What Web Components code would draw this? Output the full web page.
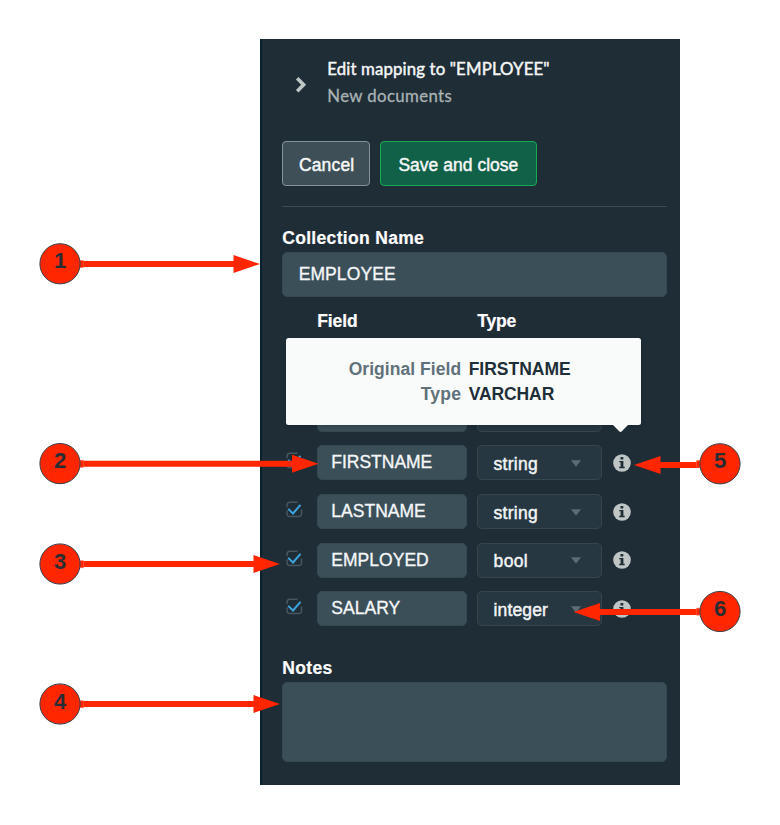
<!DOCTYPE html>
<html lang="en">
<head>
<meta charset="utf-8">
<title>Edit mapping</title>
<style>
body{margin:0;width:780px;height:825px;background:#fff;overflow:hidden;position:relative;font-family:"Liberation Sans",Arial,sans-serif}
</style>
</head>
<body>
<mapping-page></mapping-page>
<script>
const define = (name, html, setup) => customElements.define(name, class extends HTMLElement {
  connectedCallback() {
    if (this.shadowRoot) return;
    const root = this.attachShadow({mode: 'open'});
    const attr = n => this.getAttribute(n) || '';
    root.innerHTML = typeof html === 'function' ? html(attr) : html;
    if (setup) setup(this, root);
  }
});

/* One line of text whose tracking is adjusted to span the width in "w". */
define('fit-text', a => `<style>:host{display:block;width:${a('w')}px;white-space:nowrap}span{display:inline-block}</style><span>${a('text')}</span>`, (el, root) => {
  const s = root.querySelector('span');
  const gap = (Number(el.getAttribute('w')) - s.getBoundingClientRect().width) / el.getAttribute('text').length;
  s.style.letterSpacing = gap + 'px';
});

define('panel-header', `<style>
:host{display:flex;height:102px;box-sizing:border-box;padding:17px 0 0 11.5px;font-family:Lato,"Open Sans",sans-serif;font-size:16.8px;line-height:26.5px}
svg{flex:none;width:14px;height:20px;margin:19px 0 0}
div{margin-left:19.5px}
.t{color:#f4f6f6;-webkit-text-stroke:.45px #f4f6f6}
.s{color:#a9b2b3;-webkit-text-stroke:.3px #a9b2b3}
</style>
<svg viewBox="0 0 14 20"><path d="M3.2 3.2 9.6 9.7 3.2 16.2" fill="none" stroke="#bfc6c6" stroke-width="3.6"/></svg>
<div><fit-text class="t" w="222.5" text="Edit mapping to &quot;EMPLOYEE&quot;"></fit-text><fit-text class="s" w="125" text="New documents"></fit-text></div>`);

define('action-button', a => `<style>
:host{display:flex;box-sizing:border-box;width:${a('box')}px;height:45px;padding-left:${a('pad')}px;border:1px solid ${a('edge')};border-radius:4px;background:${a('fill')};color:#f5f7f7;font-size:17.5px;line-height:46px;-webkit-text-stroke:.45px #f5f7f7}
</style><fit-text w="${a('w')}" text="${a('text')}"></fit-text>`);

define('field-label', `<style>:host{display:block;font:bold 17.5px/20px "Liberation Sans",sans-serif;color:#fff;-webkit-text-stroke:.2px #fff}</style><slot></slot>`);

define('text-field', `<style>
:host{display:flex;box-sizing:border-box;background:#3b4f59;border:1px solid #364953;border-radius:5px;color:#f4f6f7;font-size:17.5px;-webkit-text-stroke:.35px #f4f6f7}
</style><slot></slot>`);

define('check-mark', `<style>:host{display:block;width:17px;height:17px}svg{display:block}</style>
<svg width="17" height="17" viewBox="0 0 17 17" fill="none"><path d="M11.5 1.2H4a3 3 0 0 0-3 3v2M1 9.5V13a2.5 2.5 0 0 0 2.5 2.5H13a2.5 2.5 0 0 0 2.5-2.5V8.5" stroke="#48575f" stroke-width="1.5"/><path d="m2.2 7.9 4.8 4.6 7.5-8.7" stroke="#3da5dc" stroke-width="2"/></svg>`);

define('type-select', a => `<style>
:host{display:flex;justify-content:space-between;align-items:center;box-sizing:border-box;width:125px;height:35px;padding:2px 20px 0 15.3px;border:1.4px solid #35464f;border-radius:5px;background:#263741;color:#f2f4f5;font-size:17.5px;line-height:30px;-webkit-text-stroke:.45px #f2f4f5}
svg{width:10px;height:7px;margin-top:-1px}
</style><fit-text w="${a('w')}" text="${a('text')}"></fit-text><svg viewBox="0 0 10 7"><path d="M0 .2h10L5 6.8z" fill="#5d6c74"/></svg>`);

define('info-icon', `<style>:host{display:block;width:18px;height:18px}svg{display:block}</style>
<svg width="18" height="18" viewBox="0 0 18 18"><circle cx="9" cy="9" r="8.8" fill="#bfc5c5"/><path d="M7.5 3h2.8v2.5H7.5zM6.2 6.9h4.2v5.9h1.3v1.4H6.2v-1.4h1.4V8.3H6.2z" fill="#1f2d36"/></svg>`);

define('field-row', a => `<style>
:host{display:flex;height:35px}
check-mark{margin:7px 14px 0 .5px}
text-field{width:150px;height:35px;padding-left:13px;line-height:32.5px;margin-right:10px}
info-icon{margin:8.7px 0 0 11px}
</style><check-mark></check-mark>
<text-field><fit-text w="${a('nw')}" text="${a('name')}"></fit-text></text-field>
<type-select w="${a('tw')}" text="${a('type')}"></type-select><info-icon></info-icon>`);

define('origin-tooltip', `<style>
:host{position:absolute;left:24.2px;top:299px;width:355px;height:87px;box-sizing:border-box;padding-top:19px;background:#f9fbfa;border-radius:2.5px;box-shadow:0 1px 4px #0d1b2455;color:#1f2f39;font-weight:bold;font-size:17.5px;line-height:25px}
.r{display:grid;grid-template-columns:175px auto;column-gap:7.5px}
.k{color:#61717a;justify-self:end}
svg{position:absolute;left:327px;top:86.5px;width:15px;height:8px}
</style>
<div class="r"><fit-text class="k" w="112.5" text="Original Field"></fit-text><fit-text w="102" text="FIRSTNAME"></fit-text></div>
<div class="r"><fit-text class="k" w="40.5" text="Type"></fit-text><fit-text w="85.5" text="VARCHAR"></fit-text></div>
<svg viewBox="0 0 15 8"><path d="M0 0h15L8.8 6.3q-1.3 1.2-2.6 0z" fill="#f9fbfa"/></svg>`);

define('covered-row', `<style>
:host{display:flex;height:35px;padding-left:31.5px;gap:10px}
text-field{width:150px}
i{box-sizing:border-box;width:125px;border:1.4px solid #35464f;border-radius:5px;background:#263741}
</style><text-field></text-field><i></i>`);

define('mapping-panel', `<style>
:host{display:block;position:relative;box-sizing:border-box;width:420px;height:746px;margin:39px 0 0 260px;padding:0 13px 0 20.2px;border-left:2px solid #06212c;background:#1f2d37}
.actions{display:flex;gap:10px;height:65px}
hr{margin:0;border:0;height:1px;background:#3d4c54}
.name{padding:21px 0 4px}
.big{height:45px;padding-left:15.5px;line-height:42px}
.cols{display:flex;box-sizing:border-box;padding:14px 0 0 35px;height:99.8px}
.cols .f{width:160px}
.rows{display:flex;flex-direction:column;gap:13.65px;padding-left:3.6px}
.notes{padding:31.2px 0 4.4px}
.area{height:80px}
</style>
<panel-header></panel-header>
<div class="actions"><action-button box="88" pad="15.7" w="55.5" text="Cancel" fill="#3e4f58" edge="#82949b"></action-button><action-button box="157" pad="17.2" w="120" text="Save and close" fill="#116149" edge="#13aa52"></action-button></div>
<hr>
<field-label class="name"><fit-text w="142" text="Collection Name"></fit-text></field-label>
<text-field class="big"><fit-text w="97" text="EMPLOYEE"></fit-text></text-field>
<div class="cols"><field-label class="f"><fit-text w="40.5" text="Field"></fit-text></field-label><field-label><fit-text w="39" text="Type"></fit-text></field-label></div>
<div class="rows"></div>
<field-label class="notes"><fit-text w="50.5" text="Notes"></fit-text></field-label>
<text-field class="area"></text-field>
<origin-tooltip></origin-tooltip>`, (el, root) => {
  const rows = [['FIRSTNAME',101,'string',44.5],['LASTNAME',94.5,'string',44.5],['EMPLOYED',97.5,'bool',34.5],['SALARY',69,'integer',54.5]];
  /* The first row is tucked beneath the tooltip; only its lower edge shows. */
  root.querySelector('.rows').innerHTML = '<covered-row></covered-row>' + rows.map(([n,nw,t,tw]) => `<field-row name="${n}" nw="${nw}" type="${t}" tw="${tw}"></field-row>`).join('');
});

/* Numbered marker with an arrow from its rim to the point (tip, ay). */
define('call-out', a => {
  const x = +a('x'), y = +a('y'), tip = +a('tip'), ay = +a('ay'), d = tip > x ? 1 : -1;
  const base = tip - d * 26.5, start = x + d * 19;
  return `<style>
:host{position:absolute;inset:0;pointer-events:none}
svg{position:absolute;inset:0}
b{position:absolute;left:${x-20}px;top:${y-22.5}px;width:40px;font-size:22px;line-height:40px;text-align:center;color:#282c33}
</style><svg width="780" height="825"><path d="M${start} ${ay-3}H${base}V${ay-9}L${tip} ${ay}L${base} ${ay+9}V${ay+3}H${start}z" fill="#ff2600"/><path d="M${x+d*20} ${y-3.3}h${d*3.5}v7h${-d*3.5}z" fill="#ff2600" stroke="#ff6a50" stroke-width=".5"/><circle cx="${x}" cy="${y}" r="20.1" fill="#ff2600" stroke="#3a414a" stroke-width="1"/></svg><b>${a('n')}</b>`;
});

define('mapping-page', `<style>:host{display:flow-root;position:relative;width:780px;height:825px}</style>
<mapping-panel></mapping-panel>
<call-out n="1" x="60" y="263.8" tip="260" ay="264"></call-out>
<call-out n="2" x="60" y="463.6" tip="318.5" ay="463.8"></call-out>
<call-out n="3" x="60" y="564" tip="280" ay="564"></call-out>
<call-out n="4" x="60" y="704" tip="280" ay="704"></call-out>
<call-out n="5" x="720" y="463.8" tip="634" ay="465"></call-out>
<call-out n="6" x="720" y="611.5" tip="573.5" ay="612"></call-out>`);
</script>
</body>
</html>
